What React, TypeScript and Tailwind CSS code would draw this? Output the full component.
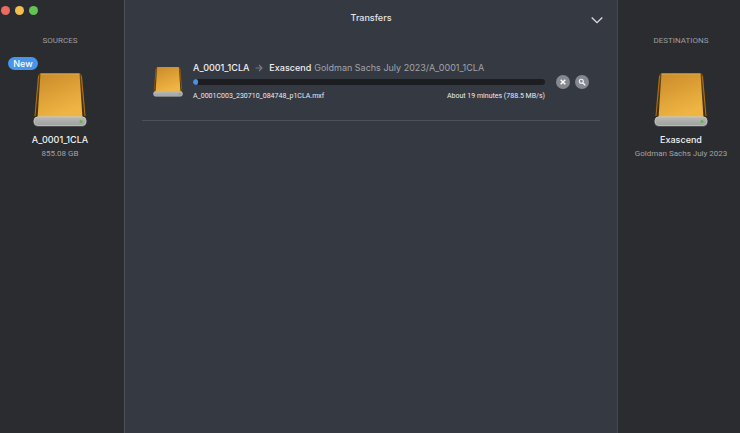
import { useId } from "react";

function Drive({ className }: { className: string }) {
  const id = useId();
  const gold = `${id}-gold`;
  const side = `${id}-side`;
  const silver = `${id}-silver`;
  return (
    <svg viewBox="0 0 54 54" className={className} aria-hidden="true">
      <defs>
        <linearGradient id={gold} x1="0" y1="0" x2="0.4" y2="1">
          <stop offset="0" stopColor="#c98a2b" />
          <stop offset="0.5" stopColor="#dda036" />
          <stop offset="1" stopColor="#efb544" />
        </linearGradient>
        <linearGradient id={side} x1="0" y1="0" x2="0" y2="1">
          <stop offset="0" stopColor="#6b480f" />
          <stop offset="1" stopColor="#3d2c0a" />
        </linearGradient>
        <linearGradient id={silver} x1="0" y1="0" x2="0" y2="1">
          <stop offset="0" stopColor="#b9bab7" />
          <stop offset="1" stopColor="#9fa19d" />
        </linearGradient>
      </defs>
      <path d="M7 0.500 H47 Q48.800 0.500 49 2.500 L53.200 46 H0.800 L5 2.500 Q5.200 0.500 7 0.500Z" fill={`url(#${side})`} />
      <path d="M5.600 3 L2 43" stroke="#a8731f" strokeWidth="1" />
      <path d="M48.400 3 L52 43" stroke="#a8731f" strokeWidth="1" />
      <path d="M7.500 0.500 H46.500 L49.500 45 H4.500Z" fill={`url(#${gold})`} />
      <path d="M7.500 1 H46.500" stroke="#e5ad4c" strokeWidth="0.800" />
      <rect x="0.300" y="44" width="53.400" height="9.700" rx="4.500" fill="#55585a" />
      <rect x="1" y="43.800" width="52" height="8.700" rx="4" fill={`url(#${silver})`} stroke="#c8cac8" strokeWidth="0.800" />
      <circle cx="48" cy="48.500" r="1.500" fill="#5fb552" />
    </svg>
  );
}

type VolumeProps = { name: string; detail: string; badge?: string };

function Volume({ name, detail, badge }: VolumeProps) {
  return (
    <section className="mt-[10px] flex w-full flex-col items-center">
      <div className="flex h-[13px] w-full items-center">
        {badge && (
          <span className="ml-2 flex h-[13px] w-[30px] items-center justify-center rounded-full bg-[#4895ec] text-[9px] font-medium text-white">
            {badge}
          </span>
        )}
      </div>
      <Drive className="mt-[3px] size-[54px]" />
      <h3 className="mt-[5px] text-[9px] leading-4 font-medium text-[#f2f2f3]">{name}</h3>
      <p className="font-['Roboto','Liberation_Sans',sans-serif] text-[8px] leading-3 whitespace-nowrap text-[#a2a3a6]">{detail}</p>
    </section>
  );
}

function WindowControls() {
  return (
    <div className="flex w-full gap-[5px] pl-px">
      <button type="button" aria-label="Close" className="size-[9px] rounded-full bg-[#ed6a5e]" />
      <button type="button" aria-label="Minimize" className="size-[9px] rounded-full bg-[#f4be4f]" />
      <button type="button" aria-label="Zoom" className="size-[9px] rounded-full bg-[#61c454]" />
    </div>
  );
}

function PanelTitle({ children }: { children: string }) {
  return (
    <h2 className="text-center font-['Roboto','Liberation_Sans',sans-serif] text-[8px] leading-3 text-[#9d9ea1]">
      {children}
    </h2>
  );
}

function Transfer() {
  return (
    <article className="flex items-start border-b border-[#4d5057] pr-[11px] pb-[18px] pl-[11px]">
      <Drive className="mt-[7px] size-[30px] shrink-0" />
      <div className="ml-[10px] min-w-0 flex-1">
        <h2 className="flex items-center text-[9px] leading-4 font-medium whitespace-nowrap text-[#f0f0f1]">
          <span>A_0001_1CLA</span>
          <svg viewBox="0 0 8 8" className="mx-[6px] size-2" fill="none" stroke="#777b82" strokeWidth="1.200" aria-hidden="true">
            <path d="M0.500 4H7M4 1L7 4L4 7" />
          </svg>
          <span>Exascend</span>
          <span className="ml-[3px] font-normal text-[#a2a4a8]">Goldman Sachs July 2023/A_0001_1CLA</span>
        </h2>
        <div
          role="progressbar"
          aria-label="Copy progress"
          aria-valuenow={1}
          className="mt-[3px] h-[6px] overflow-hidden rounded-full bg-[#1d1e21]"
        >
          <div className="h-full w-[5px] rounded-full bg-[#4790e3]" />
        </div>
        <div className="mt-[5px] flex justify-between font-['Roboto','Liberation_Sans',sans-serif] text-[7px] leading-3 whitespace-nowrap text-[#ececee]">
          <span>A_0001C003_230710_084748_p1CLA.mxf</span>
          <span>About 19 minutes (788.5 MB/s)</span>
        </div>
      </div>
      <div className="mt-[15px] ml-[11px] flex gap-[5px]">
        <button type="button" aria-label="Cancel transfer" className="flex size-[14px] items-center justify-center rounded-full bg-[#858890]">
          <svg viewBox="0 0 14 14" className="size-[14px]" stroke="#ffffff" strokeWidth="1.500" aria-hidden="true">
            <path d="M4.700 4.700L9.300 9.300M9.300 4.700L4.700 9.300" />
          </svg>
        </button>
        <button type="button" aria-label="Show in Finder" className="flex size-[14px] items-center justify-center rounded-full bg-[#858890]">
          <svg viewBox="0 0 14 14" className="size-[14px]" fill="none" stroke="#f4f4f5" aria-hidden="true">
            <circle cx="6.300" cy="6.300" r="2" strokeWidth="1.100" />
            <path d="M7.900 7.900L10.200 10.200" strokeWidth="1.400" />
          </svg>
        </button>
      </div>
    </article>
  );
}

export default function App() {
  return (
    <div className="flex min-h-screen bg-[#353942] font-['Inter','Liberation_Sans',sans-serif]">
      <aside className="w-[125px] shrink-0 border-r border-[#505257] bg-[#2b2c30] pt-[6px]">
        <WindowControls />
        <div className="mt-5 pr-1">
          <PanelTitle>SOURCES</PanelTitle>
          <Volume name="A_0001_1CLA" detail="855.08 GB" badge="New" />
        </div>
      </aside>
      <main className="min-w-0 flex-1 px-[17px]">
        <header className="grid h-[60px] grid-cols-[1fr_auto_1fr] items-start pt-[10px]">
          <h1 className="col-start-2 text-[9px] leading-4 font-medium text-[#e3e4e5]">Transfers</h1>
          <button type="button" aria-label="Collapse transfers" className="mt-1 -mr-[3px] justify-self-end">
            <svg viewBox="0 0 12 12" className="size-3" fill="none" stroke="#dcdddf" strokeWidth="1.300" aria-hidden="true">
              <path d="M0.700 3.500L6 8.700L11.300 3.500" />
            </svg>
          </button>
        </header>
        <Transfer />
      </main>
      <aside className="w-[123px] shrink-0 border-l border-[#45474c] bg-[#2b2c30] pt-[35px] pl-1">
        <PanelTitle>DESTINATIONS</PanelTitle>
        <Volume name="Exascend" detail="Goldman Sachs July 2023" />
      </aside>
    </div>
  );
}
